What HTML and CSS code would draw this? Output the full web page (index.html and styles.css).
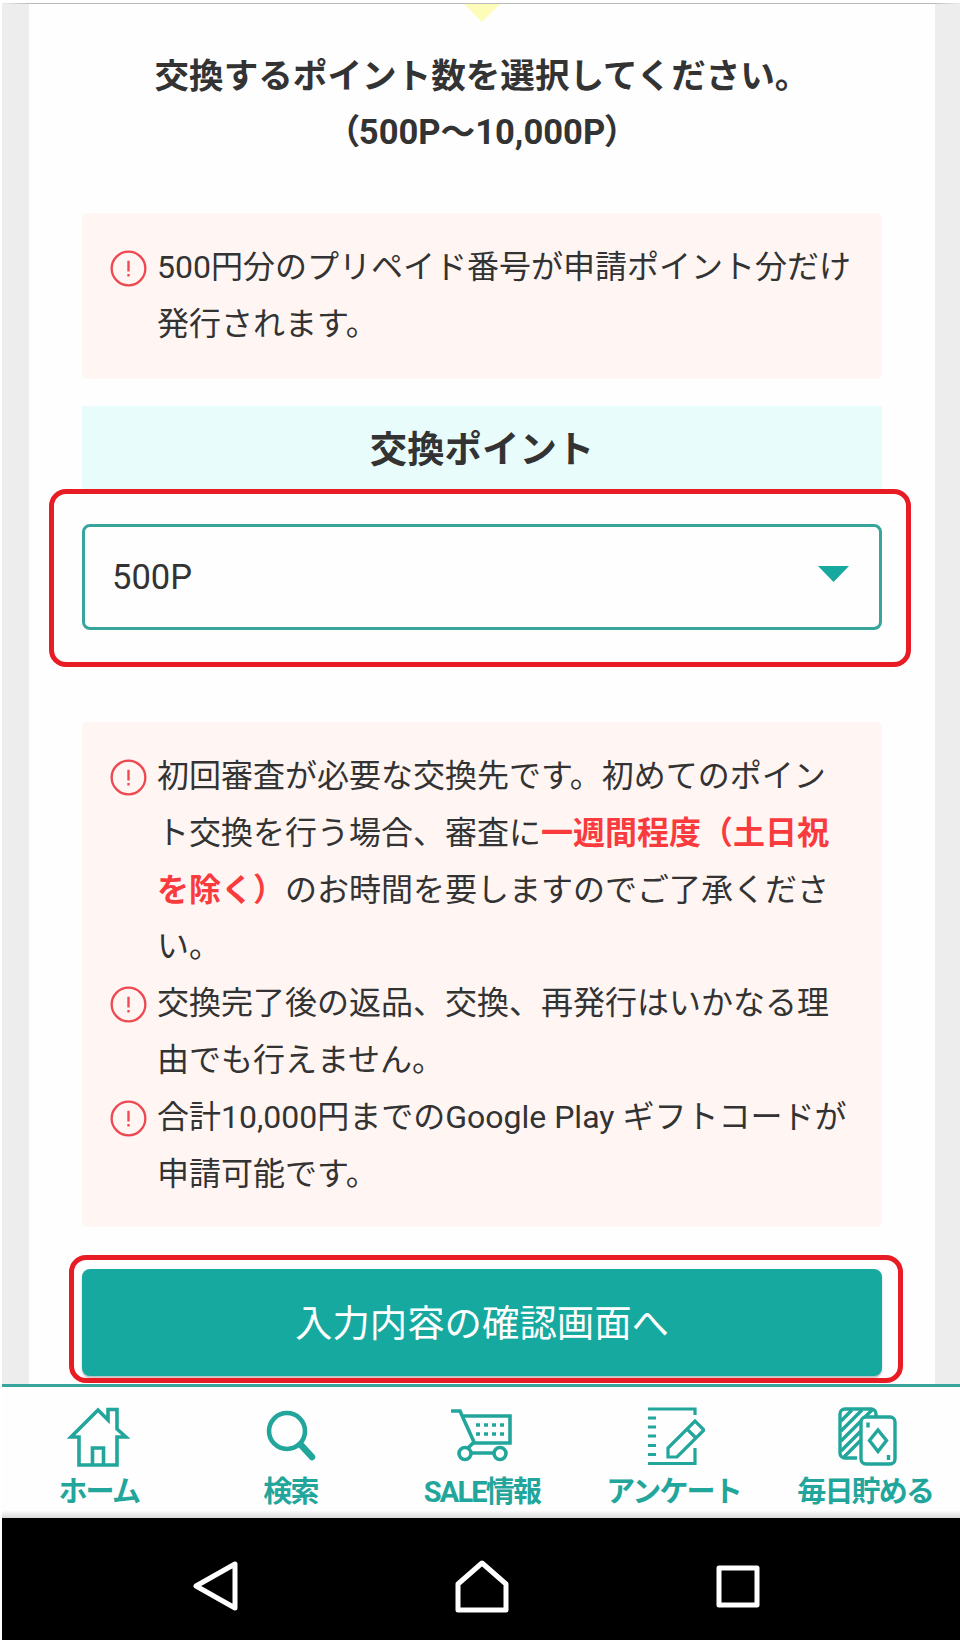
FILE: index.html
```
<!DOCTYPE html>
<html lang="ja">
<head>
    <meta charset="UTF-8">
    <meta name="viewport" content="width=device-width, initial-scale=1.0">
    <title>ポイント交換</title>
    <link rel="stylesheet" href="styles.css">
</head>
<body>
    <div class="screen">
        <main class="page">
            <div class="step-arrow"></div>

            <h1 class="title">交換するポイント数を選択してください。<br><span class="title-range">（500P～10,000P）</span></h1>

            <ul class="notice notice-top">
                <li>
                    <svg class="notice-icon" viewBox="0 0 38 38"><circle cx="19" cy="19" r="17.3"/><path d="M19 11v11M19 24.6v2.6"/></svg>
                    <p>500円分のプリペイド番号が申請ポイント分だけ<br>発行されます。</p>
                </li>
            </ul>

            <h2 class="section-title">交換ポイント</h2>

            <div class="select-area">
                <div class="select-box">
                    <span>500P</span>
                    <span class="select-arrow"></span>
                </div>
                <div class="mark mark-select"></div>
            </div>

            <ul class="notice">
                <li>
                    <svg class="notice-icon" viewBox="0 0 38 38"><circle cx="19" cy="19" r="17.3"/><path d="M19 11v11M19 24.6v2.6"/></svg>
                    <p>初回審査が必要な交換先です。初めてのポイン<br>ト交換を行う場合、審査に<strong>一週間程度（土日祝<br>を除く）</strong>のお時間を要しますのでご了承くださ<br>い。</p>
                </li>
                <li>
                    <svg class="notice-icon" viewBox="0 0 38 38"><circle cx="19" cy="19" r="17.3"/><path d="M19 11v11M19 24.6v2.6"/></svg>
                    <p>交換完了後の返品、交換、再発行はいかなる理<br>由でも行えません。</p>
                </li>
                <li>
                    <svg class="notice-icon" viewBox="0 0 38 38"><circle cx="19" cy="19" r="17.3"/><path d="M19 11v11M19 24.6v2.6"/></svg>
                    <p>合計10,000円までのGoogle Play ギフトコードが<br>申請可能です。</p>
                </li>
            </ul>

            <div class="submit-area">
                <button class="btn-submit" type="button">入力内容の確認画面へ</button>
                <div class="mark mark-submit"></div>
            </div>
        </main>

        <nav class="tab-bar">
            <a class="tab" href="#">
                <svg viewBox="0 0 64 64" stroke-width="3.6">
                    <path d="M13 60V32H5L32 5l10 10V4.500h9V24l9 8h-9v28z"/>
                    <path d="M26.500 59V43h11v16"/>
                </svg>
                <span>ホーム</span>
            </a>
            <a class="tab" href="#">
                <svg viewBox="0 0 64 64">
                    <circle cx="29" cy="26" r="18" stroke-width="4.600"/>
                    <path d="M43 40l11 12" stroke-width="6.500" stroke-linecap="round"/>
                </svg>
                <span>検索</span>
            </a>
            <a class="tab" href="#">
                <svg viewBox="0 0 64 64" stroke-width="3.6">
                    <path d="M2 6h9l14 31-6 6M13 11h48v27H25M23 48h22"/>
                    <circle cx="16" cy="48.500" r="6"/>
                    <circle cx="51" cy="48.500" r="6"/>
                    <path d="M27 20h31M27 29h31" stroke-dasharray="4 4"/>
                </svg>
                <span>SALE情報</span>
            </a>
            <a class="tab" href="#">
                <svg viewBox="0 0 64 64" stroke-width="3.2">
                    <path d="M7 4h47v6M7 58.500h47V43M7 13h8M7 22h8M7 31h8M7 40.500h8M7 49.500h8"/>
                    <path d="M27 52V43l27-27 9 9-27 27zM46 24l9 9"/>
                </svg>
                <span>アンケート</span>
            </a>
            <a class="tab" href="#">
                <svg viewBox="0 0 64 64" stroke-width="3.400">
                    <path d="M24 53H12a5 5 0 0 1-5-5V9a5 5 0 0 1 5-5h26a5 5 0 0 1 5 5v3"/>
                    <path d="M8 16L19 5M8 26L29 5M8 36L39 5M8 46L28 26M11 52l17-17"/>
                    <rect x="28" y="12" width="34" height="47" rx="5"/>
                    <path d="M45 25l8.500 10.500-8.500 11-8.500-11zM35 17.500v5M55.500 50v5"/>
                </svg>
                <span>毎日貯める</span>
            </a>
        </nav>

        <div class="system-bar">
            <svg class="sys-back" viewBox="0 0 50 54"><path d="M43 4v44L4 26z"/></svg>
            <svg class="sys-home" viewBox="0 0 56 54"><path d="M28 3L4 24v26h48V24z"/></svg>
            <svg class="sys-recent" viewBox="0 0 46 46"><rect x="4" y="4" width="38" height="37"/></svg>
        </div>
    </div>
</body>
</html>
```
FILE: styles.css
```
:root {
    --primary-color: #16a9a0;
    --line-color: #37a59b;
    --text-color: #333;
    --alert-color: #f93b3e;
    --icon-red: #ee4850;
    --mark-color: #e81c24;
    --notice-bg: #fff6f4;
}

* {
    box-sizing: border-box;
}

body {
    margin: 0;
    background: #fff;
    color: var(--text-color);
    font-family: Roboto, "Noto Sans CJK JP", sans-serif;
    text-spacing-trim: space-all;
}

h1, h2, p, ul {
    margin: 0;
    padding: 0;
}

.screen {
    width: 960px;
    height: 1640px;
    padding: 3px 0 0 2px;
    display: flex;
    flex-direction: column;
    overflow: hidden;
}

.page {
    height: 1381px;
    border-top: 1px solid #bbb;
    border-left: 27px solid #ededed;
    border-right: 25px solid #ededed;
    padding: 0 53px;
    background: #fefefe;
}

.step-arrow {
    width: 36px;
    height: 18px;
    margin: 0 auto;
    background: #fdfcb9;
    clip-path: polygon(0 0, 100% 0, 50% 100%);
}

.title {
    height: 191px;
    padding-top: 27px;
    font-size: 34.600px;
    line-height: 55.500px;
    font-weight: 700;
    text-align: center;
    white-space: nowrap;
}

.title-range {
    font-feature-settings: "palt";
}

.notice {
    height: 505px;
    padding: 26px 28px;
    border-radius: 5px;
    background: var(--notice-bg);
    list-style: none;
    font-size: 32px;
    line-height: 56.800px;
}

.notice-top {
    height: 166px;
}

.notice li {
    display: flex;
    gap: 10px;
}

.notice p {
    white-space: nowrap;
}

.notice-icon {
    flex: none;
    width: 37px;
    height: 37px;
    margin-top: 11px;
    fill: none;
    stroke: var(--icon-red);
    stroke-width: 2.400;
}

.notice strong {
    color: var(--alert-color);
}

.section-title {
    height: 84px;
    margin-top: 27px;
    padding-top: 2px;
    background: #e8fcfb;
    font-size: 37.400px;
    line-height: 84px;
    text-align: center;
}

.select-area {
    position: relative;
    height: 232px;
    padding-top: 34px;
}

.select-box {
    height: 106px;
    padding: 0 30px 0 27px;
    border: 3px solid var(--line-color);
    border-radius: 8px;
    display: flex;
    justify-content: space-between;
    align-items: center;
    font-size: 34.600px;
}

.select-arrow {
    width: 31px;
    height: 16px;
    margin-bottom: 6px;
    background: var(--primary-color);
    clip-path: polygon(0 0, 100% 0, 50% 100%);
}

/* 赤枠 */
.mark {
    position: absolute;
    border: 5px solid var(--mark-color);
    border-radius: 17px;
}

.mark-select {
    top: -1px;
    left: -33px;
    width: 862px;
    height: 178px;
}

.submit-area {
    position: relative;
    padding-top: 42px;
}

.btn-submit {
    display: block;
    width: 100%;
    height: 107px;
    padding: 0 0 4px;
    border: none;
    border-radius: 8px;
    background: var(--primary-color);
    box-shadow: 0 2px 2px rgba(0, 0, 0, 0.25);
    color: #fff;
    font-family: inherit;
    font-size: 37.400px;
}

.mark-submit {
    top: 28px;
    left: -13px;
    width: 834px;
    height: 128px;
}

.tab-bar {
    height: 134px;
    border-top: 3px solid var(--line-color);
    display: grid;
    grid-template-columns: repeat(5, 1fr);
    background: linear-gradient(#fefefe 94%, #d8d8d8);
}

.tab {
    padding: 18px 0 0 1px;
    display: flex;
    flex-direction: column;
    align-items: center;
    gap: 3px;
    color: #22a69c;
    text-decoration: none;
    font-size: 29px;
    line-height: 40px;
    font-weight: 700;
    letter-spacing: -1.800px;
    white-space: nowrap;
}

.tab span {
    padding-left: 1px;
}

.tab svg {
    width: 64px;
    height: 64px;
    fill: none;
    stroke: currentColor;
}

.tab rect {
    fill: #fefefe;
}

.system-bar {
    height: 122px;
    padding-top: 15px;
    display: flex;
    align-items: center;
    background: #000;
}

.system-bar svg {
    fill: none;
    stroke: #fff;
    stroke-width: 5;
    stroke-linejoin: round;
}

.sys-back {
    width: 50px;
    height: 54px;
    margin-left: 190px;
}

.sys-home {
    width: 56px;
    height: 54px;
    margin-left: 212px;
}

.sys-recent {
    width: 46px;
    height: 46px;
    margin-left: 205px;
}
```
